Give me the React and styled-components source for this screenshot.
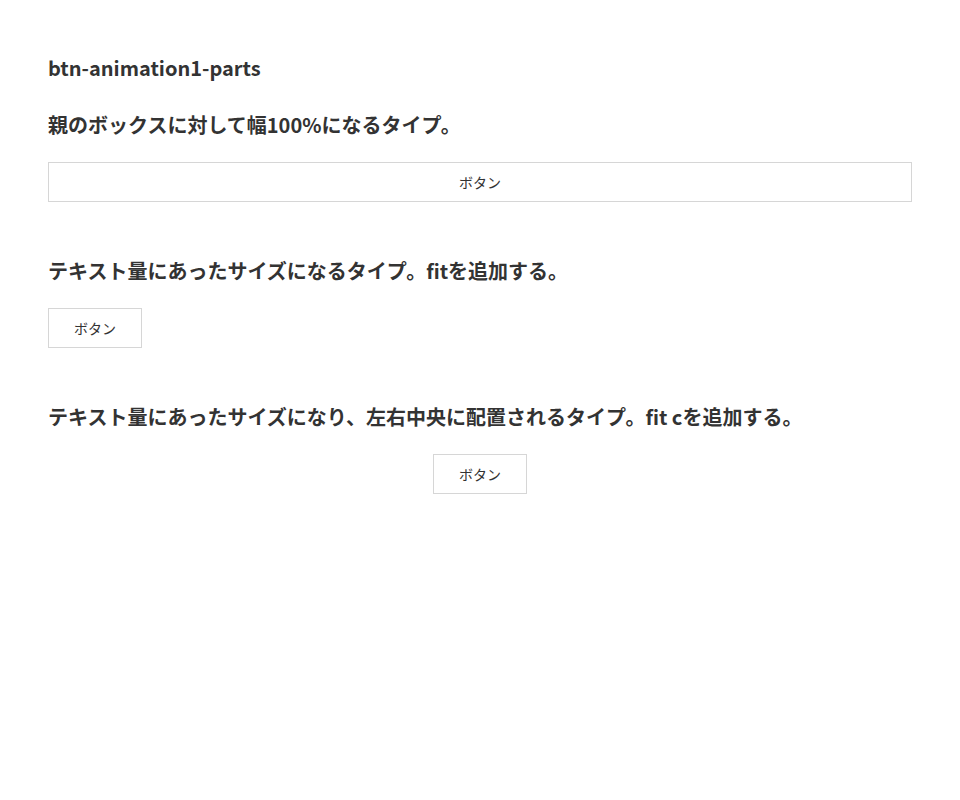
import React from 'react';
import styled, { createGlobalStyle } from 'styled-components';

const GlobalStyle = createGlobalStyle`
  body {
    margin: 0;
    background: #fff;
    color: #333;
    font-family: "Noto Sans CJK JP", "Noto Sans", sans-serif;
  }
`;

const Page = styled.main`
  padding: 51px 48px 48px;
`;

const Title = styled.h1`
  margin: 0 0 26px;
  font-size: 20px;
  line-height: 33px;
  font-weight: 700;
  color: #333;
`;

const Section = styled.section`
  margin-bottom: 54px;
`;

const Heading = styled.h3`
  margin: 0 0 22px;
  font-size: 20px;
  line-height: 30px;
  font-weight: 700;
  color: #333;
`;

const Button = styled.a`
  display: flex;
  align-items: center;
  justify-content: center;
  box-sizing: border-box;
  height: 40px;
  width: ${({ fit }) => (fit ? '94px' : '100%')};
  margin: ${({ center }) => (center ? '0 auto' : '0')};
  border: 1px solid #d6d6d6;
  background: #fff;
  color: #333;
  font-size: 14px;
  text-decoration: none;
  cursor: pointer;
`;

const sections = [
  { heading: '親のボックスに対して幅100%になるタイプ。' },
  { heading: 'テキスト量にあったサイズになるタイプ。fitを追加する。', fit: true },
  { heading: 'テキスト量にあったサイズになり、左右中央に配置されるタイプ。fit cを追加する。', fit: true, center: true },
];

const App = () => (
  <>
    <GlobalStyle />
    <Page>
      <Title>btn-animation1-parts</Title>
      {sections.map((s, i) => (
        <Section key={i}>
          <Heading>{s.heading}</Heading>
          <Button fit={s.fit} center={s.center}>ボタン</Button>
        </Section>
      ))}
    </Page>
  </>
);

export default App;
